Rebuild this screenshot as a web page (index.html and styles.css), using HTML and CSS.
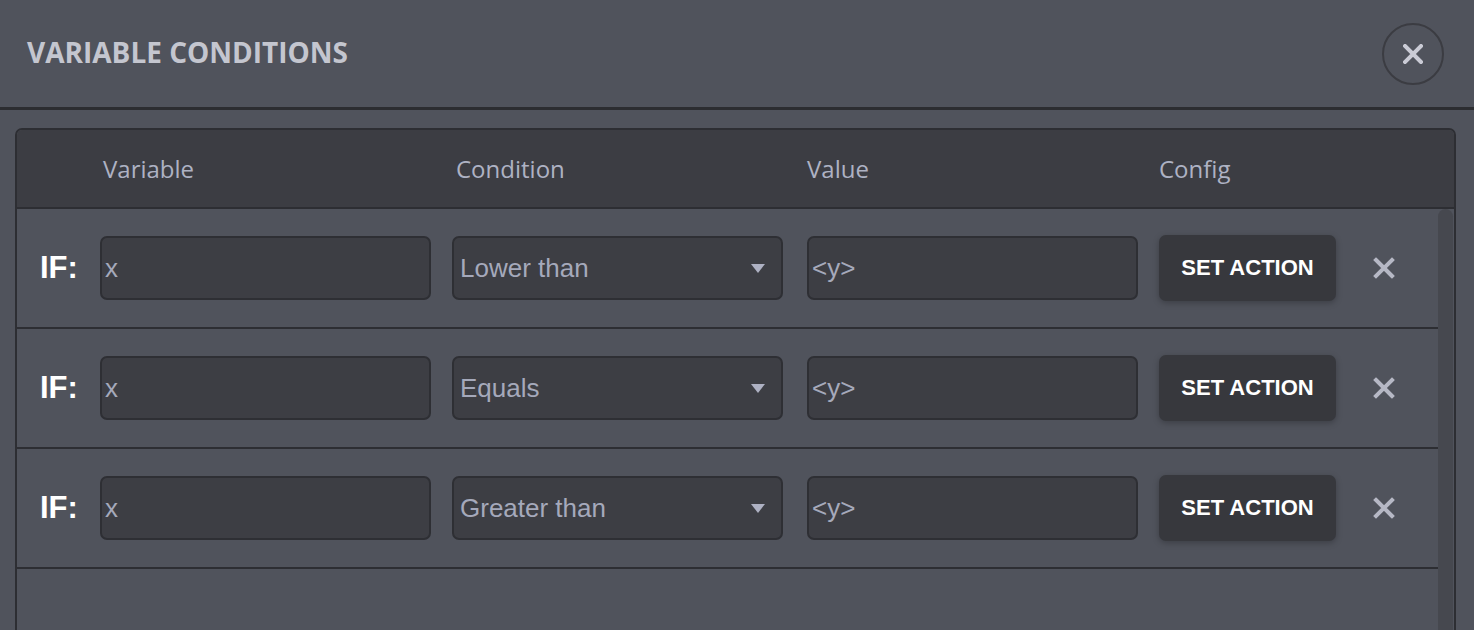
FILE: index.html
```html
<!DOCTYPE html>
<html lang="en">
<head>
    <meta charset="UTF-8">
    <meta name="viewport" content="width=device-width, initial-scale=1.0">
    <title>Variable Conditions</title>
    <link rel="stylesheet" href="styles.css">
</head>
<body>

    <!-- Modal header -->
    <div class="modal-header">
        <h1 class="modal-title">VARIABLE CONDITIONS</h1>
        <button class="close-button" title="Close">
            <svg width="20" height="20" viewBox="0 0 20 20">
                <path d="M2 2 L18 18 M18 2 L2 18" stroke="#cacbd5" stroke-width="4" stroke-linecap="square"/>
            </svg>
        </button>
    </div>

    <div class="modal-body">
        <div class="cond-table">
            <div class="cond-head">
                <div></div>
                <div class="head-cell">Variable</div>
                <div class="head-cell">Condition</div>
                <div class="head-cell">Value</div>
                <div class="head-cell">Config</div>
            </div>

            <div class="cond-body">
                <div class="cond-rows">
                    <div class="cond-row">
                        <div class="if-label">IF:</div>
                        <input class="field field-text" type="text" value="x">
                        <div class="select-wrap">
                            <select class="field">
                                <option selected>Lower than</option>
                                <option>Equals</option>
                                <option>Greater than</option>
                            </select>
                        </div>
                        <input class="field field-text" type="text" value="&lt;y&gt;">
                        <button class="btn-action">SET ACTION</button>
                        <button class="btn-remove" title="Remove">
                            <svg width="22" height="22" viewBox="0 0 22 22">
                                <path d="M3 3 L19 19 M19 3 L3 19" stroke="#b6b8c5" stroke-width="4" stroke-linecap="square"/>
                            </svg>
                        </button>
                    </div>

                    <div class="cond-row">
                        <div class="if-label">IF:</div>
                        <input class="field field-text" type="text" value="x">
                        <div class="select-wrap">
                            <select class="field">
                                <option>Lower than</option>
                                <option selected>Equals</option>
                                <option>Greater than</option>
                            </select>
                        </div>
                        <input class="field field-text" type="text" value="&lt;y&gt;">
                        <button class="btn-action">SET ACTION</button>
                        <button class="btn-remove" title="Remove">
                            <svg width="22" height="22" viewBox="0 0 22 22">
                                <path d="M3 3 L19 19 M19 3 L3 19" stroke="#b6b8c5" stroke-width="4" stroke-linecap="square"/>
                            </svg>
                        </button>
                    </div>

                    <div class="cond-row">
                        <div class="if-label">IF:</div>
                        <input class="field field-text" type="text" value="x">
                        <div class="select-wrap">
                            <select class="field">
                                <option>Lower than</option>
                                <option>Equals</option>
                                <option selected>Greater than</option>
                            </select>
                        </div>
                        <input class="field field-text" type="text" value="&lt;y&gt;">
                        <button class="btn-action">SET ACTION</button>
                        <button class="btn-remove" title="Remove">
                            <svg width="22" height="22" viewBox="0 0 22 22">
                                <path d="M3 3 L19 19 M19 3 L3 19" stroke="#b6b8c5" stroke-width="4" stroke-linecap="square"/>
                            </svg>
                        </button>
                    </div>

                    <div class="cond-empty"></div>
                </div>

                <!-- fake scrollbar -->
                <div class="scroll-track">
                    <div class="scroll-thumb"></div>
                </div>
            </div>
        </div>
    </div>

</body>
</html>
```

FILE: styles.css
```css
body, html {
    height: 100%;
    margin: 0;
    overflow: hidden;
    font-family: 'Open Sans', 'Liberation Sans', sans-serif;
    background-color: #50535c;
    color: #c4c6cf;
}

/* Header */
.modal-header {
    height: 107px;
    display: flex;
    align-items: center;
    justify-content: space-between;
    padding: 0 30px 0 27px;
    border-bottom: 3px solid #2c2d31;
}

.modal-title {
    margin: 0 0 4px 0;
    font-size: 28px;
    font-weight: 700;
    color: #c4c6cf;
}

.close-button {
    width: 62px;
    height: 62px;
    border-radius: 50%;
    border: 2px solid #3b3c42;
    background: none;
    padding: 0;
    display: flex;
    align-items: center;
    justify-content: center;
    cursor: pointer;
}

/* Body */
.modal-body {
    padding: 18px 18px 0 15px;
}

.cond-table {
    border: 2px solid #2d2e33;
    border-radius: 7px 7px 0 0;
    overflow: hidden;
}

.cond-head,
.cond-row {
    display: grid;
    align-items: center;
}

.cond-head {
    grid-template-columns: 86px 353px 351px 352px 1fr;
    height: 77px;
    background: #3c3d43;
    border-bottom: 2px solid #2d2e33;
}

.cond-row {
    grid-template-columns: 83px 352px 355px 352px 177px 1fr;
    height: 118px;
    border-bottom: 2px solid #2d2e33;
}

.head-cell {
    font-size: 24px;
    color: #aeb2c3;
}

.cond-body {
    display: flex;
}

.cond-rows {
    flex: 1;
}

.cond-empty {
    height: 200px;
}

.if-label {
    padding-left: 23px;
    font-family: 'Liberation Sans', Arial, sans-serif;
    font-weight: 700;
    font-size: 31px;
    color: #ffffff;
}

.field {
    width: 331px;
    height: 64px;
    box-sizing: border-box;
    background: #3d3e44;
    border: 2px solid #2e2f34;
    border-radius: 7px;
    padding: 0 0 0 6px;
    font-family: 'Liberation Sans', Arial, sans-serif;
    font-size: 26px;
    color: #a5a9bb;
    outline: none;
    -webkit-appearance: none;
    appearance: none;
}

.field-text {
    padding-left: 3px;
}

.select-wrap {
    position: relative;
    width: 331px;
}

.select-wrap::after {
    content: '';
    position: absolute;
    right: 18px;
    top: 28px;
    border-left: 7px solid transparent;
    border-right: 7px solid transparent;
    border-top: 9px solid #aeb1c3;
}

.btn-action {
    width: 177px;
    height: 66px;
    background: #37383d;
    border: none;
    border-radius: 7px;
    box-shadow: 0 2px 6px rgba(0, 0, 0, 0.25);
    font-family: 'Liberation Sans', Arial, sans-serif;
    font-weight: 700;
    font-size: 22px;
    color: #ffffff;
    cursor: pointer;
}

.btn-remove {
    justify-self: start;
    margin-left: 37px;
    background: none;
    border: none;
    padding: 0;
    display: flex;
    cursor: pointer;
}

/* Scrollbar look-alike */
.scroll-track {
    width: 16px;
}

.scroll-thumb {
    width: 15px;
    height: 100%;
    background: #46484f;
    border-radius: 8px 8px 0 0;
}
```
